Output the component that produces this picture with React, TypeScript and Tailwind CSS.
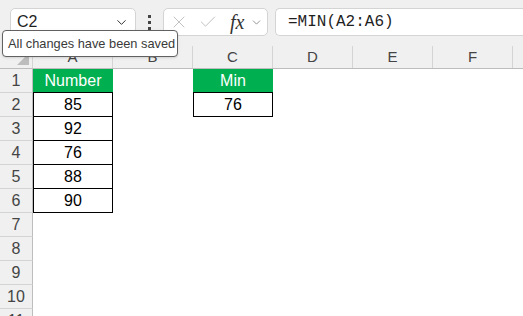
import { X, Check, ChevronDown } from 'lucide-react';

const cols = ['A', 'B', 'C', 'D', 'E', 'F'];

type CellSpec = { text: string; kind: 'head' | 'val'; first?: boolean };

// row number -> column -> cell
const data: Record<number, Record<string, CellSpec>> = {
  1: { A: { text: 'Number', kind: 'head' }, C: { text: 'Min', kind: 'head' } },
  2: { A: { text: '85', kind: 'val', first: true }, C: { text: '76', kind: 'val', first: true } },
  3: { A: { text: '92', kind: 'val' } },
  4: { A: { text: '76', kind: 'val' } },
  5: { A: { text: '88', kind: 'val' } },
  6: { A: { text: '90', kind: 'val' } },
};

const Cell = ({ spec }: { spec?: CellSpec }) => {
  if (!spec) return <div className="w-[80px] h-full shrink-0" />;
  if (spec.kind === 'head') {
    return (
      <div className="w-[80px] h-full shrink-0 bg-[#00b050] text-white flex items-center justify-center text-[16px]">
        {spec.text}
      </div>
    );
  }
  return (
    <div
      className={`w-[80px] shrink-0 border-x border-b border-black text-black flex items-center justify-center text-[16px] ${
        spec.first ? 'border-t -mt-px h-[25px]' : 'h-full'
      }`}
    >
      {spec.text}
    </div>
  );
};

export default function App() {
  const rows = Array.from({ length: 11 }, (_, i) => i + 1);

  return (
    <div className="relative w-[523px] h-[316px] overflow-hidden bg-white" style={{ fontFamily: '"Liberation Sans", Arial, sans-serif' }}>
      {/* formula bar */}
      <div className="h-[46px] bg-[#f0f0f0] flex items-start pt-[8px] pl-[10px]">
        <div className="w-[126px] h-[28px] bg-white border border-[#d4d4d4] rounded-[5px] flex items-center pl-[6px] pr-[6px] shrink-0">
          <span className="text-[16px] text-[#1f1f1f] flex-1">C2</span>
          <ChevronDown size={15} strokeWidth={1.6} className="text-[#333]" />
        </div>
        <div className="w-[27px] h-[28px] flex flex-col items-center justify-center gap-[3px] shrink-0">
          <span className="w-[3px] h-[3px] bg-[#444]" />
          <span className="w-[3px] h-[3px] bg-[#444]" />
          <span className="w-[3px] h-[3px] bg-[#444]" />
        </div>
        <div className="w-[105px] h-[28px] bg-white border border-[#d4d4d4] rounded-[5px] flex items-center pl-[5px] shrink-0">
          <X size={20} strokeWidth={1} className="text-[#b5b5b5]" />
          <Check size={20} strokeWidth={1} className="text-[#b5b5b5] ml-[9px]" />
          <span className="ml-[12px] text-[20px] italic text-[#333] leading-none" style={{ fontFamily: '"Liberation Serif", serif' }}>
            fx
          </span>
          <ChevronDown size={13} strokeWidth={1.4} className="text-[#777] ml-[6px]" />
        </div>
        <div className="ml-[7px] h-[28px] flex-1 bg-white border border-[#d4d4d4] border-r-0 rounded-l-[5px] flex items-center pl-[12px]">
          <span className="text-[16px] text-[#1f1f1f]" style={{ fontFamily: '"Liberation Mono", monospace' }}>
            =MIN(A2:A6)
          </span>
        </div>
      </div>

      {/* column headers */}
      <div className="flex h-[22px] bg-[#f0f0f0] border-b border-[#bdbdbd] box-content">
        <div className="w-[33px] shrink-0 border-r border-[#d4d4d4] relative">
          <div className="absolute right-[3px] bottom-[3px] w-0 h-0 border-l-[12px] border-l-transparent border-b-[12px] border-b-[#bdbdbd]" />
        </div>
        {cols.map((c) => (
          <div key={c} className="w-[80px] shrink-0 border-r border-[#d4d4d4] flex items-center justify-center text-[15px] text-[#444]">
            {c}
          </div>
        ))}
        <div className="flex-1" />
      </div>

      {/* rows */}
      {rows.map((r) => (
        <div key={r} className="flex h-[24px]">
          <div className="w-[33px] shrink-0 h-full bg-[#f0f0f0] border-r border-r-[#bdbdbd] border-b border-b-[#d4d4d4] flex items-center justify-center text-[16px] text-[#444]">
            {r}
          </div>
          {cols.map((c) => (
            <Cell key={c} spec={data[r]?.[c]} />
          ))}
        </div>
      ))}

      {/* tooltip */}
      <div className="absolute left-[2px] top-[30px] w-[176px] h-[27px] bg-white border border-[#616161] rounded-[4px] flex items-center pl-[5px] text-[12.8px] text-[#3a3a3a] whitespace-nowrap shadow-sm">
        All changes have been saved
      </div>
    </div>
  );
}
